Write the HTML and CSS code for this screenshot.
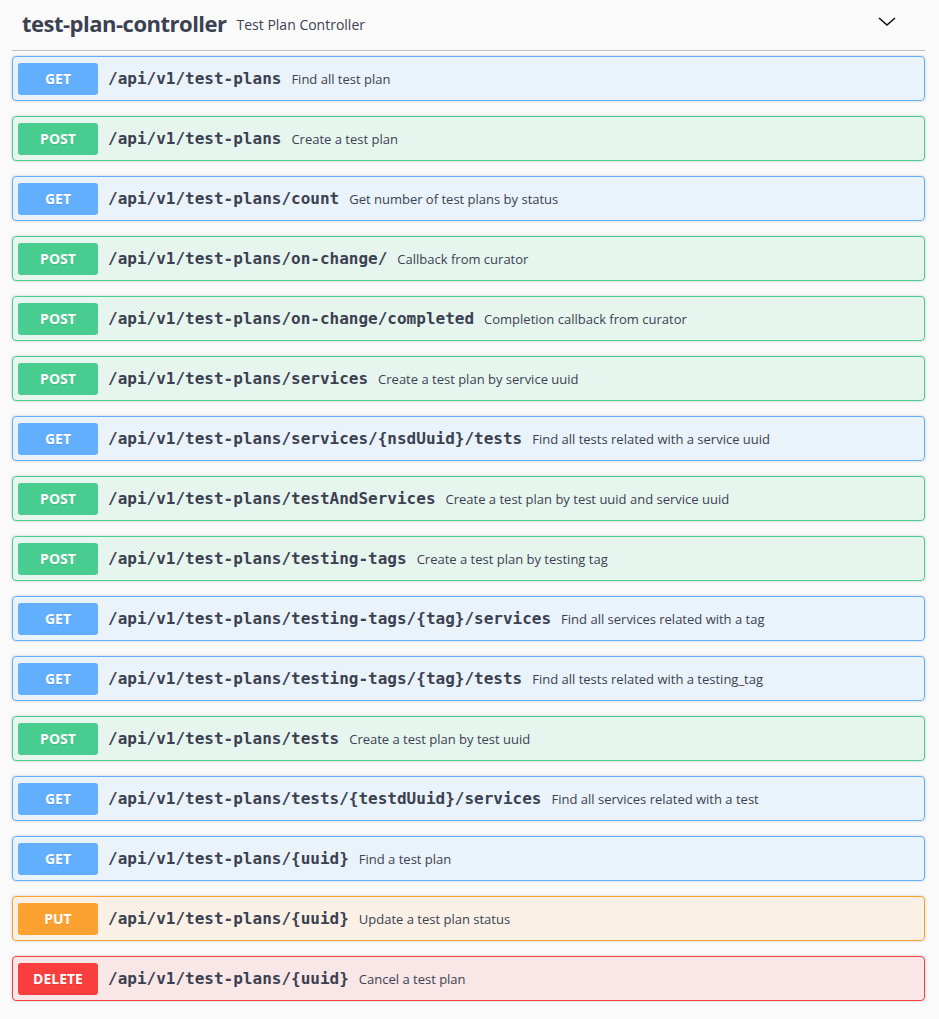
FILE: index.html
```html
<!DOCTYPE html>
<html lang="en">
<head>
    <meta charset="UTF-8">
    <title>Swagger UI - test-plan-controller</title>
    <link rel="stylesheet" href="styles.css">
</head>
<body>
    <div class="tag-section">
        <div class="tag-header">
            <h4 class="tag-title">test-plan-controller</h4>
            <span class="tag-desc">Test Plan Controller</span>
            <svg class="tag-arrow" width="20" height="20" viewBox="0 0 20 20">
                <path d="M2 6 L10 13 L18 6" fill="none" stroke="#111" stroke-width="1.6"/>
            </svg>
        </div>

        <div class="opblock get">
            <span class="method">GET</span>
            <span class="path">/api/v1/test-plans</span>
            <span class="summary">Find all test plan</span>
        </div>
        <div class="opblock post">
            <span class="method">POST</span>
            <span class="path">/api/v1/test-plans</span>
            <span class="summary">Create a test plan</span>
        </div>
        <div class="opblock get">
            <span class="method">GET</span>
            <span class="path">/api/v1/test-plans/count</span>
            <span class="summary">Get number of test plans by status</span>
        </div>
        <div class="opblock post">
            <span class="method">POST</span>
            <span class="path">/api/v1/test-plans/on-change/</span>
            <span class="summary">Callback from curator</span>
        </div>
        <div class="opblock post">
            <span class="method">POST</span>
            <span class="path">/api/v1/test-plans/on-change/completed</span>
            <span class="summary">Completion callback from curator</span>
        </div>
        <div class="opblock post">
            <span class="method">POST</span>
            <span class="path">/api/v1/test-plans/services</span>
            <span class="summary">Create a test plan by service uuid</span>
        </div>
        <div class="opblock get">
            <span class="method">GET</span>
            <span class="path">/api/v1/test-plans/services/{nsdUuid}/tests</span>
            <span class="summary">Find all tests related with a service uuid</span>
        </div>
        <div class="opblock post">
            <span class="method">POST</span>
            <span class="path">/api/v1/test-plans/testAndServices</span>
            <span class="summary">Create a test plan by test uuid and service uuid</span>
        </div>
        <div class="opblock post">
            <span class="method">POST</span>
            <span class="path">/api/v1/test-plans/testing-tags</span>
            <span class="summary">Create a test plan by testing tag</span>
        </div>
        <div class="opblock get">
            <span class="method">GET</span>
            <span class="path">/api/v1/test-plans/testing-tags/{tag}/services</span>
            <span class="summary">Find all services related with a tag</span>
        </div>
        <div class="opblock get">
            <span class="method">GET</span>
            <span class="path">/api/v1/test-plans/testing-tags/{tag}/tests</span>
            <span class="summary">Find all tests related with a testing_tag</span>
        </div>
        <div class="opblock post">
            <span class="method">POST</span>
            <span class="path">/api/v1/test-plans/tests</span>
            <span class="summary">Create a test plan by test uuid</span>
        </div>
        <div class="opblock get">
            <span class="method">GET</span>
            <span class="path">/api/v1/test-plans/tests/{testdUuid}/services</span>
            <span class="summary">Find all services related with a test</span>
        </div>
        <div class="opblock get">
            <span class="method">GET</span>
            <span class="path">/api/v1/test-plans/{uuid}</span>
            <span class="summary">Find a test plan</span>
        </div>
        <div class="opblock put">
            <span class="method">PUT</span>
            <span class="path">/api/v1/test-plans/{uuid}</span>
            <span class="summary">Update a test plan status</span>
        </div>
        <div class="opblock delete">
            <span class="method">DELETE</span>
            <span class="path">/api/v1/test-plans/{uuid}</span>
            <span class="summary">Cancel a test plan</span>
        </div>
    </div>
</body>
</html>
```

FILE: styles.css
```css
body {
    margin: 0;
    background: #fafafa;
    color: #3b4151;
    font-family: 'Open Sans', sans-serif;
}

.tag-section {
    padding: 0 14px 0 12px;
}

.tag-header {
    display: flex;
    align-items: center;
    height: 50px;
    padding: 0 20px 0 10px;
    margin-bottom: 5px;
    border-bottom: 1px solid rgba(59, 65, 81, 0.3);
}

.tag-title {
    margin: 0 10px 4px 0;
    font-size: 22px;
    font-weight: 700;
    letter-spacing: -0.5px;
    color: #3b4151;
}

.tag-desc {
    flex: 1;
    font-size: 14px;
    margin-bottom: 2px;
}

.tag-arrow {
    margin: 0 8px 6px 0;
}

.opblock {
    display: flex;
    align-items: center;
    height: 43px;
    padding: 0 5px;
    margin-bottom: 15px;
    border: 1px solid #000;
    border-radius: 4px;
    box-shadow: 0 0 3px rgba(0, 0, 0, 0.19);
}

.method {
    min-width: 80px;
    height: 32px;
    line-height: 32px;
    border-radius: 3px;
    text-align: center;
    color: #fff;
    font-size: 14px;
    font-weight: 700;
    text-shadow: 0 1px 0 rgba(0, 0, 0, 0.1);
}

.path {
    margin-left: 10px;
    padding-right: 10px;
    font-family: 'DejaVu Sans Mono', monospace;
    font-size: 16px;
    font-weight: 700;
    color: #3b4151;
}

.summary {
    font-size: 13px;
    color: #3b4151;
}

.opblock.get { background: rgba(97, 175, 254, 0.1); border-color: #61affe; }
.opblock.get .method { background: #61affe; }

.opblock.post { background: rgba(73, 204, 144, 0.1); border-color: #49cc90; }
.opblock.post .method { background: #49cc90; }

.opblock.put { background: rgba(252, 161, 48, 0.1); border-color: #fca130; }
.opblock.put .method { background: #fca130; }

.opblock.delete { background: rgba(249, 62, 62, 0.1); border-color: #f93e3e; }
.opblock.delete .method { background: #f93e3e; }
```
